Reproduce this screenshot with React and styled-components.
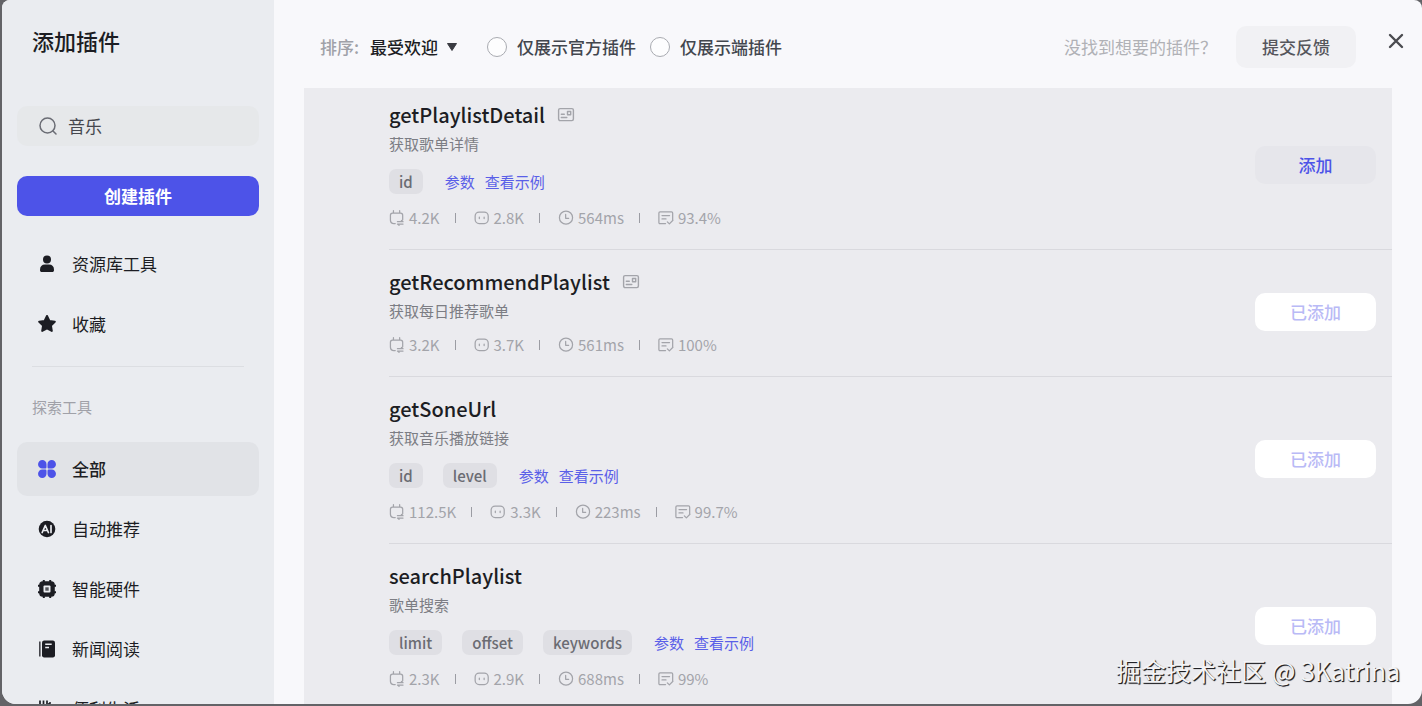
import React from "react";
import styled, { createGlobalStyle, css } from "styled-components";

const GlobalStyle = createGlobalStyle`
  * { box-sizing: border-box; }
  body {
    margin: 0;
    background: #636367;
    font-family: "Noto Sans CJK SC", "Noto Sans", sans-serif;
    line-height: 24px;
    color: #1c1d23;
  }
  button, input, select { font-family: inherit; line-height: inherit; }
`;

const Page = styled.div`
  position: relative;
  height: 100vh;
  padding: 0 0 2px 2px;
  overflow: hidden;
`;

const Dialog = styled.section`
  display: flex;
  height: 100%;
  border-radius: 8px 8px 14px 14px;
  background: #f8f8fb;
  overflow: hidden;
`;

const Sidebar = styled.aside`
  display: flex;
  flex-direction: column;
  flex: none;
  width: 272px;
  padding: 20px 15px 0;
  background: #eaecf0;
  overflow: hidden;
`;

const Title = styled.h1`
  margin: 0 0 46px;
  padding-left: 15px;
  font-size: 22px;
  line-height: 40px;
  font-weight: 500;
`;

const SearchBox = styled.label`
  display: flex;
  flex: none;
  align-items: center;
  gap: 11px;
  height: 40px;
  margin-bottom: 30px;
  padding: 0 22px;
  border-radius: 10px;
  background: #e6e8ea;
  color: #6b6d75;
`;

const SearchInput = styled.input`
  flex: 1;
  min-width: 0;
  padding: 0;
  border: 0;
  outline: 0;
  background: transparent;
  font-size: 17px;
  color: #45474e;
`;

const CreateButton = styled.button`
  flex: none;
  height: 40px;
  margin-bottom: 21px;
  padding: 0;
  border: 0;
  border-radius: 10px;
  background: #4d53e8;
  color: #fff;
  font-size: 17px;
  font-weight: 700;
`;

const Nav = styled.nav`
  display: flex;
  flex: none;
  flex-direction: column;
  gap: 6px;
`;

const NavItem = styled.a`
  display: flex;
  align-items: center;
  gap: 16px;
  height: 54px;
  padding: 0 21px;
  border-radius: 10px;
  color: #1c1d23;
  font-size: 17px;
  text-decoration: none;
  ${(p) =>
    p.$active &&
    css`
      background: #e1e3e7;
      font-weight: 500;
      svg { color: #4d53e8; }
    `}
`;

const Divider = styled.hr`
  flex: none;
  width: 212px;
  height: 1px;
  margin: 15px 15px 28px;
  border: 0;
  background: #dcdee2;
`;

const NavLabel = styled.h2`
  margin: 0 0 23px;
  padding-left: 15px;
  font-size: 15px;
  font-weight: 400;
  color: #a0a1a8;
`;

const Main = styled.main`
  display: flex;
  flex: 1;
  flex-direction: column;
  min-width: 0;
  padding: 0 30px;
`;

const Toolbar = styled.header`
  display: flex;
  flex: none;
  align-items: center;
  height: 88px;
  padding: 6px 0 0 16px;
  font-size: 17px;
`;

const SortLabel = styled.label`
  margin-right: 11px;
  color: #a0a1a8;
  font-weight: 500;
`;

const SelectWrap = styled.span`
  display: flex;
  align-items: center;
  margin-right: 29px;
`;

const Select = styled.select`
  width: 90px;
  padding: 0;
  border: 0;
  outline: 0;
  appearance: none;
  background: transparent;
  font-size: 17px;
  font-weight: 500;
  color: #1c1d23;
`;

const Arrow = styled.svg`
  margin-left: -14px;
  pointer-events: none;
`;

const Option = styled.label`
  display: flex;
  align-items: center;
  gap: 10px;
  margin-right: 14px;
  font-weight: 500;
  color: #42464e;
`;

const Radio = styled.input`
  appearance: none;
  width: 20px;
  height: 20px;
  margin: 0;
  border: 1px solid #a9abb1;
  border-radius: 50%;
  background: #fdfdfe;
`;

const Hint = styled.span`
  margin-left: auto;
  margin-right: 19px;
  color: #b0b1b6;
`;

const FeedbackButton = styled.button`
  width: 120px;
  height: 42px;
  margin-right: 32px;
  padding: 0;
  border: 0;
  border-radius: 10px;
  background: #f1f1f4;
  color: #55565c;
  font-size: 17px;
  font-weight: 500;
`;

const CloseButton = styled.button`
  display: flex;
  align-items: center;
  height: 16px;
  margin: -12px -12px 0 0;
  padding: 0;
  border: 0;
  background: transparent;
  color: #4a4b50;
`;

const List = styled.ul`
  flex: 1;
  min-height: 0;
  margin: 0;
  padding: 0 0 0 85px;
  background: #ebebef;
  list-style: none;
  overflow: hidden;
`;

const Row = styled.li`
  display: flex;
  align-items: center;
  justify-content: space-between;
  padding: 17px 16px 19px 0;
  border-bottom: 1px solid #d9d9de;
  &:first-child { margin-top: -5px; }
`;

const Name = styled.h3`
  display: flex;
  align-items: center;
  gap: 12px;
  margin: 0 0 2px;
  font-size: 20px;
  line-height: 30px;
  font-weight: 500;
  svg { color: #a3a4aa; }
`;

const Description = styled.p`
  margin: 0;
  font-size: 15px;
  color: #7c7d84;
`;

const Tags = styled.div`
  display: flex;
  align-items: center;
  gap: 20px;
  height: 25px;
  margin: 13px 0 2px;
`;

const Tag = styled.span`
  padding: 0 10px;
  border-radius: 7px;
  background: #dfdfe4;
  color: #6b6c73;
  font-size: 15px;
  font-weight: 500;
  line-height: 25px;
`;

const Links = styled.span`
  display: flex;
  gap: 10px;
  padding-left: 2px;
`;

const TextLink = styled.a`
  color: #5a5fe8;
  font-size: 15px;
  text-decoration: none;
`;

const Stats = styled.div`
  display: flex;
  align-items: center;
  padding-top: 10px;
  color: #a3a4aa;
  font-size: 15px;
`;

const Stat = styled.span`
  display: flex;
  align-items: center;
  gap: 4px;
  & + & {
    margin-left: 15px;
  }
  & + &::before {
    content: "";
    width: 1px;
    height: 10px;
    margin-right: 14px;
    background: #9b9ca3;
  }
`;

const AddButton = styled.button`
  flex: none;
  width: 121px;
  height: 38px;
  padding: 0;
  border: 0;
  border-radius: 10px;
  background: ${(p) => (p.$added ? "#ffffff" : "#e6e6eb")};
  color: ${(p) => (p.$added ? "#b9baf6" : "#4d53e8")};
  font-size: 17px;
  font-weight: 500;
`;

const Watermark = styled.div`
  position: absolute;
  right: 22px;
  bottom: 18px;
  font-size: 25px;
  line-height: 36px;
  color: #f4f4f6;
  text-shadow: 1px 1px 1px #1c1c20, 1px 1px 0 #4a4a4e;
  pointer-events: none;
`;

const Icon = ({ size = 18, children, ...rest }) => (
  <svg width={size} height={size} viewBox="0 0 18 18" fill="currentColor" aria-hidden="true" {...rest}>
    {children}
  </svg>
);

const line = { fill: "none", stroke: "currentColor", strokeWidth: 1.2, strokeLinecap: "round", strokeLinejoin: "round" };

const SearchIcon = () => (
  <Icon {...line} strokeWidth={1.5}>
    <circle cx="8.5" cy="8.5" r="7.5" />
    <path d="M14 14l3 3" />
  </Icon>
);
const UserIcon = () => (
  <Icon>
    <circle cx="9" cy="4.5" r="4" />
    <path d="M2 15c0-3.6 1.8-5.5 5-5.5h4c3.2 0 5 1.9 5 5.5 0 1.4-.6 2-2 2H4c-1.4 0-2-.6-2-2z" />
  </Icon>
);
const StarIcon = () => (
  <Icon>
    <path
      d="M9 1l2.4 4.9 5.4.8-3.9 3.8.9 5.4L9 13.4l-4.8 2.5.9-5.4L1.2 6.7l5.4-.8z"
      stroke="currentColor"
      strokeWidth="2"
      strokeLinejoin="round"
    />
  </Icon>
);
const AllIcon = () => (
  <Icon>
    <path d="M4.3 0a4.2 4.2 0 0 1 4.2 4.3V7c0 1-.5 1.5-1.5 1.5H4.3A4.25 4.25 0 0 1 4.3 0z" />
    <path d="M13.7 0a4.25 4.25 0 0 1 0 8.5H11C10 8.5 9.5 8 9.5 7V4.3A4.2 4.2 0 0 1 13.7 0z" />
    <path d="M4.3 18a4.25 4.25 0 0 1 0-8.5H7c1 0 1.5.5 1.5 1.5v2.7A4.2 4.2 0 0 1 4.3 18z" />
    <path d="M13.7 18a4.2 4.2 0 0 1-4.2-4.3V11c0-1 .5-1.5 1.5-1.5h2.7a4.25 4.25 0 0 1 0 8.5z" />
  </Icon>
);
const AiIcon = () => (
  <Icon>
    <circle cx="9" cy="9" r="8.3" />
    <path d="M4.2 12.5L7.3 5.5l3.1 7M5.4 10.5h3.8M13 5.5v7" fill="none" stroke="#eaecf0" strokeWidth="1.7" strokeLinecap="round" strokeLinejoin="round" />
  </Icon>
);
const ChipIcon = () => (
  <Icon>
    <rect x="1.2" y="1.2" width="15.6" height="15.6" rx="3.5" />
    <path d="M5.8 0v2M12.2 0v2M5.8 16v2M12.2 16v2M0 5.8h2M0 12.2h2M16 5.8h2M16 12.2h2" stroke="currentColor" strokeWidth="2" />
    <rect x="5.5" y="5.5" width="7" height="7" rx="1" fill="#eaecf0" />
    <rect x="7.3" y="7.3" width="3.4" height="3.4" fill="#55565b" />
  </Icon>
);
const BookIcon = () => (
  <Icon>
    <path d="M1.2 1.5h1.3v15H1.2z" />
    <rect x="4" y="0.5" width="13" height="17" rx="2.2" />
    <path d="M7.2 4.2h6.5M7.2 7.6h3.8" stroke="#eaecf0" strokeWidth="1.5" fill="none" />
  </Icon>
);
const LifeIcon = () => (
  <Icon>
    <path d="M2 0.5v6a3.5 3.5 0 0 0 7 0v-6M5.5 0.5V17M11 3v14M11 3h2" fill="none" stroke="currentColor" strokeWidth="1.7" />
  </Icon>
);

const CardIcon = () => (
  <Icon {...line} strokeWidth={1.4}>
    <rect x="1.6" y="2.6" width="14.8" height="12" rx="1.5" />
    <rect x="10.5" y="5.5" width="3.2" height="3.2" />
    <path d="M4.3 8.2h3M4.3 11.5h5.5" />
  </Icon>
);
const PlugIcon = () => (
  <Icon size={16} {...line} strokeWidth={1.4}>
    <path d="M5 .8v2.8M12 .8v2.8M7 15.3H5.5A4 4 0 0 1 1.6 11.4V6c0-1.5.9-2.4 2.4-2.4h9c1.5 0 2.4.9 2.4 2.4v5M9.500 13.200h6.300L14 11.800M15.800 15.800H9.500l1.800 1.400" />
  </Icon>
);
const BotIcon = () => (
  <Icon size={16} {...line} strokeWidth={1.4}>
    <rect x="1.3" y="2.3" width="14.7" height="13" rx="4.5" />
    <path d="M6 8v1.6M11.4 8v1.6" />
  </Icon>
);
const ClockIcon = () => (
  <Icon size={16} {...line} strokeWidth={1.4}>
    <circle cx="9" cy="8.6" r="7.4" />
    <path d="M8.6 5v4.3h3.4" />
  </Icon>
);
const CheckListIcon = () => (
  <Icon size={16} {...line} strokeWidth={1.4}>
    <path d="M8.500 15.300H2.300c-.9 0-1.300-.5-1.300-1.300V3.500c0-.9.4-1.300 1.300-1.300h12.900c.9 0 1.300.4 1.300 1.300V11M4.500 6.200H13M4.500 10H9M10.500 13.300l2.300 2.300 4-4" />
  </Icon>
);

const library = [
  { label: "资源库工具", icon: UserIcon },
  { label: "收藏", icon: StarIcon },
];

const categories = [
  { label: "全部", icon: AllIcon, active: true },
  { label: "自动推荐", icon: AiIcon },
  { label: "智能硬件", icon: ChipIcon },
  { label: "新闻阅读", icon: BookIcon },
  { label: "便利生活", icon: LifeIcon },
];

const tools = [
  { name: "getPlaylistDetail", card: true, desc: "获取歌单详情", tags: ["id"], stats: ["4.2K", "2.8K", "564ms", "93.4%"], added: false },
  { name: "getRecommendPlaylist", card: true, desc: "获取每日推荐歌单", tags: [], stats: ["3.2K", "3.7K", "561ms", "100%"], added: true },
  { name: "getSoneUrl", desc: "获取音乐播放链接", tags: ["id", "level"], stats: ["112.5K", "3.3K", "223ms", "99.7%"], added: true },
  { name: "searchPlaylist", desc: "歌单搜索", tags: ["limit", "offset", "keywords"], stats: ["2.3K", "2.9K", "688ms", "99%"], added: true },
];

const statIcons = [PlugIcon, BotIcon, ClockIcon, CheckListIcon];

const NavList = ({ items, label }) => (
  <Nav aria-label={label}>
    {items.map(({ label: text, icon: ItemIcon, active }) => (
      <NavItem key={text} href="#" $active={active}>
        <ItemIcon />
        {text}
      </NavItem>
    ))}
  </Nav>
);

const ToolRow = ({ tool }) => (
  <Row>
    <div>
      <Name>
        {tool.name}
        {tool.card && <CardIcon />}
      </Name>
      <Description>{tool.desc}</Description>
      {tool.tags.length > 0 && (
        <Tags>
          {tool.tags.map((tag) => (
            <Tag key={tag}>{tag}</Tag>
          ))}
          <Links>
            <TextLink href="#">参数</TextLink>
            <TextLink href="#">查看示例</TextLink>
          </Links>
        </Tags>
      )}
      <Stats>
        {tool.stats.map((value, i) => {
          const StatIcon = statIcons[i];
          return (
            <Stat key={i}>
              <StatIcon />
              {value}
            </Stat>
          );
        })}
      </Stats>
    </div>
    <AddButton type="button" $added={tool.added}>
      {tool.added ? "已添加" : "添加"}
    </AddButton>
  </Row>
);

export default function App() {
  return (
    <Page>
      <GlobalStyle />
      <Dialog>
        <Sidebar>
          <Title>添加插件</Title>
          <SearchBox>
            <SearchIcon />
            <SearchInput type="text" defaultValue="音乐" aria-label="搜索" />
          </SearchBox>
          <CreateButton type="button">创建插件</CreateButton>
          <NavList items={library} label="资源" />
          <Divider />
          <NavLabel>探索工具</NavLabel>
          <NavList items={categories} label="探索工具" />
        </Sidebar>
        <Main>
          <Toolbar>
            <SortLabel htmlFor="sort">排序:</SortLabel>
            <SelectWrap>
              <Select id="sort" defaultValue="popular">
                <option value="popular">最受欢迎</option>
              </Select>
              <Arrow width="12" height="10" viewBox="0 0 12 10" aria-hidden="true">
                <path d="M1.5 1.5h9L6 8.5z" fill="#3a3b41" stroke="#3a3b41" strokeLinejoin="round" />
              </Arrow>
            </SelectWrap>
            <Option>
              <Radio type="radio" name="scope" />
              仅展示官方插件
            </Option>
            <Option>
              <Radio type="radio" name="scope" />
              仅展示端插件
            </Option>
            <Hint>没找到想要的插件？</Hint>
            <FeedbackButton type="button">提交反馈</FeedbackButton>
            <CloseButton type="button" aria-label="关闭">
              <svg width="16" height="16" viewBox="0 0 16 16" fill="none" stroke="currentColor" strokeWidth="2.4" strokeLinecap="round" aria-hidden="true">
                <path d="M2 2l12 12M14 2L2 14" />
              </svg>
            </CloseButton>
          </Toolbar>
          <List>
            {tools.map((tool) => (
              <ToolRow key={tool.name} tool={tool} />
            ))}
          </List>
        </Main>
      </Dialog>
      <Watermark>掘金技术社区 @ 3Katrina</Watermark>
    </Page>
  );
}
